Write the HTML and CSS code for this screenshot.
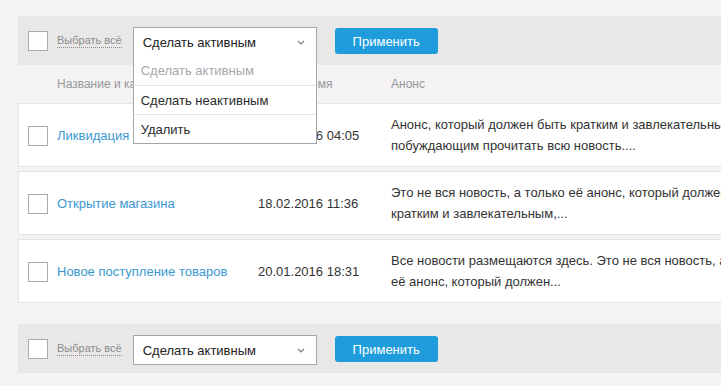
FILE: index.html
```html
<!DOCTYPE html>
<html lang="ru">
<head>
<meta charset="utf-8">
<link rel="stylesheet" href="styles.css">
</head>
<body>
<div class="page">
  <div class="bar">
    <span class="check"></span>
    <span class="select-all">Выбрать всё</span>
    <div class="select-wrap">
      <div class="select">
        <span>Сделать активным</span>
        <svg class="chev" width="8" height="5" viewBox="0 0 8 5"><path d="M1 1 L4 4 L7 1" fill="none" stroke="#7a7d80" stroke-width="1.1"/></svg>
      </div>
      <ul class="menu">
        <li class="disabled">Сделать активным</li>
        <li>Сделать неактивным</li>
        <li>Удалить</li>
      </ul>
    </div>
    <button class="apply">Применить</button>
  </div>

  <div class="head">
    <span></span>
    <span>Название и категория</span>
    <span>Дата и время</span>
    <span>Анонс</span>
  </div>

  <div class="rows">
    <div class="row">
      <span class="check"></span>
      <a class="title">Ликвидация склада</a>
      <span class="date">25.03.2016 04:05</span>
      <p class="ann">Анонс, который должен быть кратким и завлекательным и побуждающим прочитать всю новость....</p>
    </div>
    <div class="row">
      <span class="check"></span>
      <a class="title">Открытие магазина</a>
      <span class="date">18.02.2016 11:36</span>
      <p class="ann">Это не вся новость, а только её анонс, который должен быть кратким и завлекательным,...</p>
    </div>
    <div class="row">
      <span class="check"></span>
      <a class="title">Новое поступление товаров</a>
      <span class="date">20.01.2016 18:31</span>
      <p class="ann">Все новости размещаются здесь. Это не вся новость, а только её анонс, который должен...</p>
    </div>
  </div>

  <div class="bar bottom">
    <span class="check"></span>
    <span class="select-all">Выбрать всё</span>
    <div class="select-wrap">
      <div class="select">
        <span>Сделать активным</span>
        <svg class="chev" width="8" height="5" viewBox="0 0 8 5"><path d="M1 1 L4 4 L7 1" fill="none" stroke="#7a7d80" stroke-width="1.1"/></svg>
      </div>
    </div>
    <button class="apply">Применить</button>
  </div>
</div>
</body>
</html>
```

FILE: styles.css
```css
html, body {
  margin: 0;
  padding: 0;
  overflow: hidden;
  background: #f4f2f3;
  font-family: "Liberation Sans", Arial, sans-serif;
  color: #333;
}

.page {
  width: 1000px;
  padding: 16px 0 0 18px;
}

.bar {
  height: 49px;
  background: #eae8e7;
  display: flex;
  align-items: center;
  padding-left: 10px;
}

.bar.bottom {
  margin-top: 21px;
}

.check {
  display: block;
  width: 18px;
  height: 18px;
  border: 1px solid #a9acaf;
  background: #fff;
  flex: none;
}

.select-all {
  margin-left: 9px;
  font-size: 11px;
  color: #8a8d90;
  border-bottom: 1px dotted #8a8d90;
  line-height: 13px;
  margin-top: 1px;
}

.select-wrap {
  position: relative;
  margin-left: 11px;
  margin-top: 3px;
}

.select {
  width: 182px;
  height: 28px;
  border: 1px solid #a4a7aa;
  background: #fff;
  box-sizing: content-box;
  display: flex;
  align-items: center;
  justify-content: space-between;
  padding: 0;
  font-size: 13px;
  color: #222;
}

.select span {
  margin-left: 9px;
}

.chev {
  margin-right: 11px;
}

.menu {
  position: absolute;
  left: 0;
  top: 29px;
  width: 182px;
  margin: 0;
  padding: 0;
  list-style: none;
  background: #fff;
  border: 1px solid #a4a7aa;
  border-top: none;
  z-index: 5;
}

.menu li {
  height: 28px;
  line-height: 30px;
  padding-left: 7px;
  font-size: 13px;
  color: #2b2b2b;
  border-top: 1px solid #e8e8e8;
}

.menu li:first-child {
  border-top: none;
  height: 29px;
}

.menu li.disabled {
  color: #a6a9ac;
}

.apply {
  margin-left: 18px;
  margin-top: 1px;
  width: 103px;
  height: 26px;
  border: none;
  border-radius: 3px;
  background: #1e9cdb;
  color: #fff;
  font-family: inherit;
  font-size: 13px;
  padding: 0;
}

.head {
  height: 38px;
  display: grid;
  grid-template-columns: 39px 201px 133px 1fr;
  align-items: center;
  font-size: 12px;
  color: #95989b;
}

.rows {
  display: flex;
  flex-direction: column;
  gap: 4px;
}

.row {
  height: 62px;
  background: #fff;
  border: 1px solid #e6e4e4;
  display: grid;
  grid-template-columns: 29px 201px 133px 380px;
  align-items: center;
  padding-left: 9px;
  box-sizing: content-box;
}

.row .check {
  margin-top: 2px;
}

.title {
  color: #3a98d0;
  font-size: 13px;
}

.date {
  font-size: 13px;
  color: #333;
}

.ann {
  margin: 0;
  font-size: 13px;
  line-height: 21px;
  color: #333;
}
```
